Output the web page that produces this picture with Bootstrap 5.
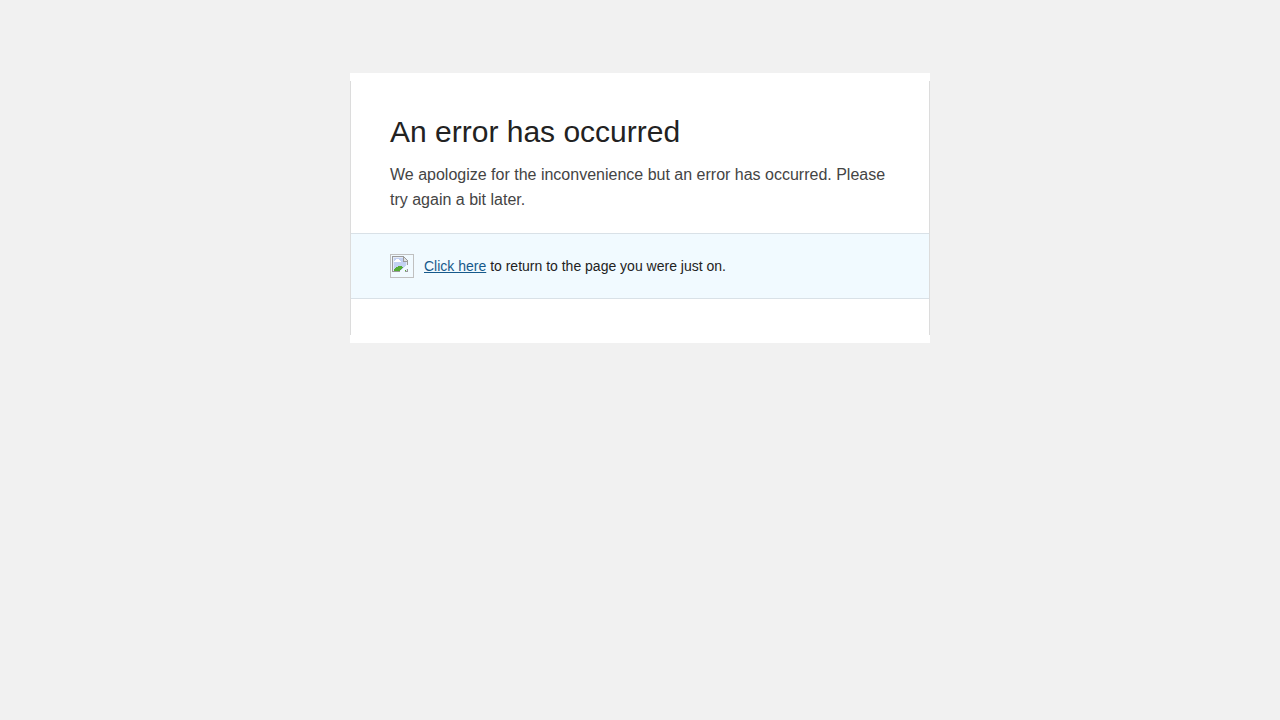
<!DOCTYPE html>
<html lang="en">
<head>
<meta charset="utf-8">
<meta name="viewport" content="width=device-width, initial-scale=1">
<title>An error has occurred</title>
<link href="https://cdn.jsdelivr.net/npm/bootstrap@5.3.0/dist/css/bootstrap.min.css" rel="stylesheet">
<style>
  body { background: #f1f1f1; color: #222; font-family: "Liberation Sans", Arial, sans-serif; }
  .notice { max-width: 580px; margin-top: 73px; padding: 8px 0; }
  .notice-body { border: solid #dcdcdc; border-width: 0 1px; padding-bottom: 36px; }
  .notice-text { padding: 32px 39px 21px; }
  .notice h1 { font-size: 30px; line-height: 38px; margin-bottom: 11px; font-weight: 400; }
  .notice p { font-size: 16px; line-height: 25px; color: #444; }
  .notice-action { background: #f1faff; border: solid #d9e1e7; border-width: 1px 0; padding: 20px 39px; gap: 10px; font-size: 14px; line-height: 24px; }
  .notice-action a { color: #16598b; }
  .picture-frame { width: 24px; height: 24px; border: 1px solid #c0c0c0; padding: 1px; }
</style>
</head>
<body>
<main class="container-fluid notice bg-white mx-auto mb-5">
  <div class="notice-body">
    <div class="notice-text">
      <h1>An error has occurred</h1>
      <p class="mb-0">We apologize for the inconvenience but an error has occurred. Please try again a bit later.</p>
    </div>
    <div class="notice-action d-flex align-items-center">
      <span class="picture-frame d-flex flex-shrink-0">
        <svg width="16" height="16" viewBox="0 0 16 16" shape-rendering="crispEdges" aria-hidden="true">
          <path fill="#e4ebf8" d="M1 1h10v5h4v9H1z"/>
          <path fill="#c3d1f2" d="M2 2h9v4h3v8H2z"/>
          <path fill="#fff" d="M2 5h1V4h1V3h3v1h1v1h1v1H2z"/>
          <path fill="#55ac35" d="M2 15v-2h1v-1h1v-1h2v-1h4v1h1v1h-1v1H9v1H8v1zM12 15v-1h1v-1h1v2z"/>
          <path fill="#f1faff" d="M8 16v-1h1v-1h1v-1h1v-1h1v-1h1v-1h1V9h2v3h-1v1h-1v1h-1v1h-1v1z"/>
          <path fill="#9a9a9a" d="M0 0h12v1H1v14h7v1H0zM11 1h1v4h4v4h-1V6h-4zM12 1h1v1h-1zM13 2h1v1h-1zM14 3h1v1h-1zM15 4h1v1h-1zM15 13h1v3h-3v-1h2z"/>
          <path fill="#e2e2e2" d="M12 2h1v1h1v1h1v1h-3z"/>
        </svg>
      </span>
      <span><a href="#">Click here</a> to return to the page you were just on.</span>
    </div>
  </div>
</main>
<script src="https://cdn.jsdelivr.net/npm/bootstrap@5.3.0/dist/js/bootstrap.bundle.min.js"></script>
</body>
</html>
